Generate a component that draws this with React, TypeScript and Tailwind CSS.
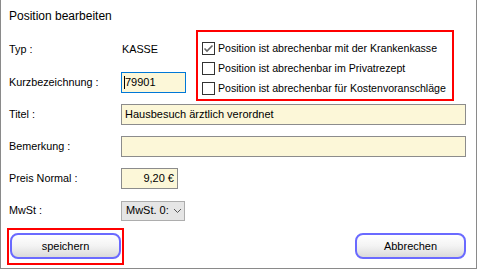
import React from 'react';

const font = { fontFamily: '"Liberation Sans", Arial, sans-serif' };

function Check({ checked, label }: { checked?: boolean; label: string }) {
  return (
    <div className="flex items-center h-[13px]">
      <div className="w-[13px] h-[13px] shrink-0 border border-[#333333] bg-white flex items-center justify-center">
        {checked && (
          <svg width="11" height="11" viewBox="0 0 11 11">
            <polyline points="1.5,5.5 4,8 9.5,2.5" fill="none" stroke="#666666" strokeWidth="1.6" />
          </svg>
        )}
      </div>
      <span className="ml-[3px] text-[10.6px] leading-[13px] text-black whitespace-nowrap">{label}</span>
    </div>
  );
}

function Row({ label, children }: { label: string; children: React.ReactNode }) {
  return (
    <div className="flex items-center h-[21px]">
      <div className="w-[112px] text-[10.8px] text-black whitespace-nowrap">{label}</div>
      {children}
    </div>
  );
}

export default function App() {
  return (
    <div className="w-[478px] h-[270px] bg-white" style={font}>
      <div className="w-[477px] h-[269px] border-l border-r border-b border-[#8a8a8a] flex flex-col">
        <div className="h-[30px] pl-[8px] pt-[9px] text-[12px] leading-[14px] text-black">Position bearbeiten</div>

        <div className="flex h-[71px]">
          <div className="w-[195px] pl-[8px]">
            <div className="mt-[9px]">
              <Row label="Typ :">
                <span className="ml-[1px] text-[10.8px] text-black">KASSE</span>
              </Row>
            </div>
            <div className="mt-[12px]">
              <Row label="Kurzbezeichnung :">
                <div className="w-[65px] h-[21px] border border-[#0078d7] bg-[#fcf7d8] flex items-center pl-[2px] text-[11px] text-black">
                  <span className="w-px h-[13px] bg-black" />
                  79901
                </div>
              </Row>
            </div>
          </div>
          <div className="w-[258px] h-[71px] border-2 border-[#ff0000] pl-[4px] pt-[10px] flex flex-col gap-[7px]">
            <Check checked label="Position ist abrechenbar mit der Krankenkasse" />
            <Check label="Position ist abrechenbar im Privatrezept" />
            <Check label="Position ist abrechenbar für Kostenvoranschläge" />
          </div>
        </div>

        <div className="pl-[8px] mt-[3px] flex flex-col gap-[11px]">
          <Row label="Titel :">
            <div className="w-[345px] h-[21px] border border-[#8c8c8c] bg-[#fcf7d8] flex items-center pl-[3px] text-[11px] text-black">
              Hausbesuch ärztlich verordnet
            </div>
          </Row>
          <Row label="Bemerkung :">
            <div className="w-[345px] h-[21px] border border-[#8c8c8c] bg-[#fcf7d8]" />
          </Row>
          <Row label="Preis Normal :">
            <div className="w-[57px] h-[21px] border border-[#8c8c8c] bg-[#fcf7d8] flex items-center justify-end pr-[3px] text-[11px] text-black">
              9,20 €
            </div>
          </Row>
          <Row label="MwSt :">
            <div className="w-[64px] h-[20px] border border-[#adadad] bg-[#e5e5e5] flex items-center pl-[4px] text-[11px] text-black">
              <span className="w-[44px] whitespace-nowrap">MwSt. 0:</span>
              <svg width="9" height="6" viewBox="0 0 9 6" className="ml-[3px]">
                <polyline points="1,1 4.5,4.5 8,1" fill="none" stroke="#555555" strokeWidth="1" />
              </svg>
            </div>
          </Row>
        </div>

        <div className="flex items-start justify-between mt-[7px] pl-[6px] pr-[10px]">
          <div className="w-[117px] h-[37px] border-2 border-[#ff0000] pl-[1px] pt-[3px]">
            <button className="w-[111px] h-[26px] rounded-[8px] border-2 border-[#6a6aff] bg-gradient-to-b from-white via-[#f3f3f3] to-[#dadada] text-[11px] text-black">
              speichern
            </button>
          </div>
          <button className="mt-[5px] w-[111px] h-[26px] rounded-[8px] border-2 border-[#6a6aff] bg-gradient-to-b from-white via-[#f3f3f3] to-[#dadada] text-[11px] text-black">
            Abbrechen
          </button>
        </div>
      </div>
    </div>
  );
}
